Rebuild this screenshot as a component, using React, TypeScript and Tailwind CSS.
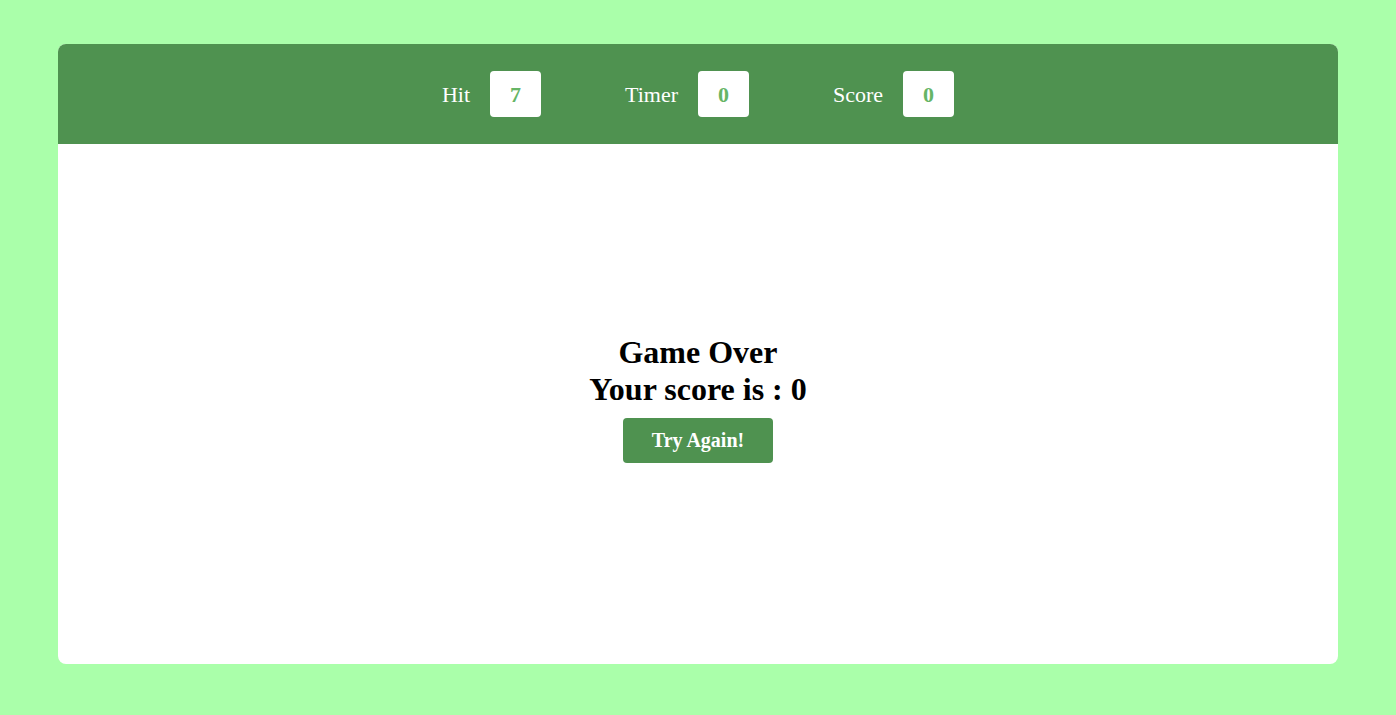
const Stat = ({ label, value }: { label: string; value: number }) => {
  return (
    <div className="flex items-center gap-5">
      <span className="text-[22px] text-white">{label}</span>
      <div className="flex h-[46px] w-[51px] items-center justify-center rounded bg-white text-[22px] font-bold text-[#66b566]">
        {value}
      </div>
    </div>
  );
};

export default function App() {
  return (
    <div className="min-h-[715px] bg-[#aaffaa] px-[58px] pt-[44px] pb-[51px] font-['Liberation_Serif',serif]">
      <div className="flex h-[620px] flex-col overflow-hidden rounded-lg bg-white">
        <header className="flex h-[100px] items-center justify-center gap-[84px] bg-[#4f9250]">
          <Stat label="Hit" value={7} />
          <Stat label="Timer" value={0} />
          <Stat label="Score" value={0} />
        </header>
        <main className="flex flex-1 flex-col items-center justify-center pb-[12px]">
          <h1 className="text-[32px] font-bold leading-[37px] text-black">Game Over</h1>
          <p className="text-[32px] font-bold leading-[37px] text-black">Your score is : 0</p>
          <button className="mt-[10px] h-[45px] w-[150px] rounded bg-[#4f9250] text-[20px] font-bold text-white">
            Try Again!
          </button>
        </main>
      </div>
    </div>
  );
}
